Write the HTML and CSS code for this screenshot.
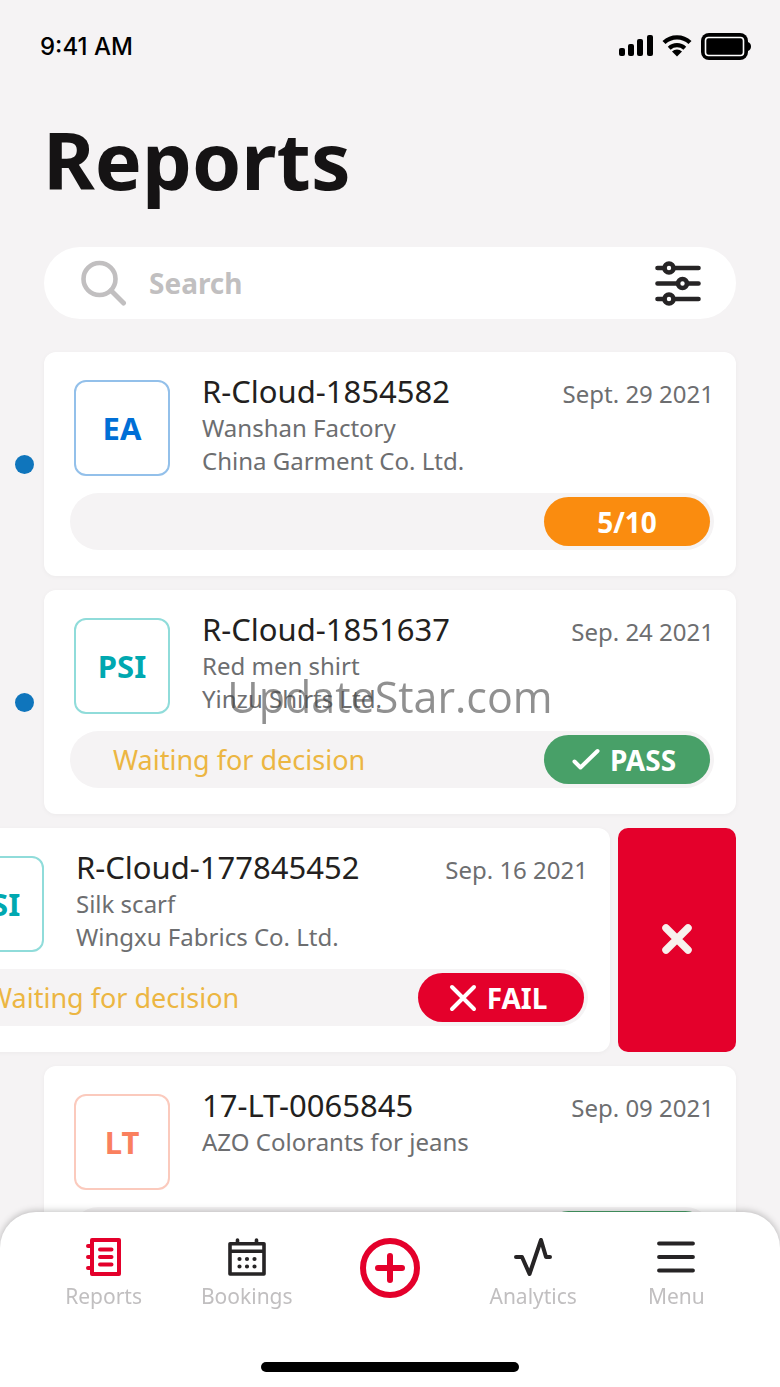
FILE: index.html
```html
<!DOCTYPE html>
<html lang="en">
<head>
    <meta charset="UTF-8">
    <meta name="viewport" content="width=device-width, initial-scale=1.0">
    <title>Reports</title>
    <link rel="stylesheet" href="styles.css">
</head>
<body>

<div class="app">
    <div class="status-bar">
        <span>9:41 AM</span>
        <div class="status-icons">
            <svg width="34" height="22" viewBox="0 0 34 22">
                <rect x="0" y="13" width="6" height="8" rx="2"/>
                <rect x="9" y="9" width="6" height="12" rx="2"/>
                <rect x="18" y="4" width="6" height="17" rx="2"/>
                <rect x="28" y="0" width="6" height="21" rx="2"/>
            </svg>
            <svg width="30" height="22" viewBox="0 0 30 22">
                <path d="M2 7.5a19 19 0 0 1 26 0" fill="none" stroke="#000" stroke-width="4.4"/>
                <path d="M7.2 13.2a11.6 11.6 0 0 1 15.6 0" fill="none" stroke="#000" stroke-width="4.2"/>
                <path d="M15 21.5l-5-5a7.5 7.5 0 0 1 10 0z"/>
            </svg>
            <svg width="50" height="27" viewBox="0 0 50 27">
                <rect x="0" y="0" width="47" height="27" rx="8"/>
                <path d="M47 9c4 1 4 8 0 9z"/>
                <rect x="4.5" y="4.5" width="38" height="18" rx="3" fill="none" stroke="#fff" stroke-width="1.6"/>
            </svg>
        </div>
    </div>

    <h1>Reports</h1>

    <form class="search">
        <label for="search" class="search-icon" aria-label="Search">
            <svg width="46" height="46" viewBox="0 0 46 46" fill="none" stroke="#c1bfc0" stroke-linecap="round">
                <circle cx="18.5" cy="19" r="16" stroke-width="4.6"/>
                <path d="M30 30.500l12.500 12.500" stroke-width="5"/>
            </svg>
        </label>
        <input type="text" id="search" name="search" placeholder="Search">
        <button type="button" class="filter" aria-label="Filter">
            <svg width="46" height="46" viewBox="0 0 46 46" fill="#fff" stroke="#262425" stroke-width="4.6" stroke-linecap="round">
                <path d="M2.5 8h41M2.5 23.5h41M2.5 39h41"/>
                <circle cx="14" cy="8" r="4.5"/>
                <circle cx="27.5" cy="23.5" r="4.5"/>
                <circle cx="14" cy="39" r="4.5"/>
            </svg>
        </button>
    </form>

    <main class="list">
        <div class="row">
            <span class="dot"></span>
            <article class="card">
                <div class="card-head">
                    <div class="tag ea">EA</div>
                    <div class="info">
                        <div class="info-top">
                            <h2>R-Cloud-1854582</h2>
                            <time datetime="2021-09-29">Sept. 29 2021</time>
                        </div>
                        <p>Wanshan Factory</p>
                        <p>China Garment Co. Ltd.</p>
                    </div>
                </div>
                <div class="progress">
                    <span class="badge orange">5/10</span>
                </div>
            </article>
        </div>

        <div class="row">
            <span class="dot"></span>
            <article class="card">
                <div class="card-head">
                    <div class="tag psi">PSI</div>
                    <div class="info">
                        <div class="info-top">
                            <h2>R-Cloud-1851637</h2>
                            <time datetime="2021-09-24">Sep. 24 2021</time>
                        </div>
                        <p>Red men shirt</p>
                        <p>Yinzu Shirts Ltd.</p>
                    </div>
                </div>
                <div class="progress">
                    <span class="waiting">Waiting for decision</span>
                    <span class="badge with-icon green">
                        <svg width="28" height="28" viewBox="0 0 28 28"><path d="M2.5 15.5l6 6L25.5 5"/></svg>
                        PASS
                    </span>
                </div>
            </article>
        </div>

        <!-- swiped open -->
        <div class="row">
            <article class="card">
                <div class="card-head">
                    <div class="tag psi">PSI</div>
                    <div class="info">
                        <div class="info-top">
                            <h2>R-Cloud-177845452</h2>
                            <time datetime="2021-09-16">Sep. 16 2021</time>
                        </div>
                        <p>Silk scarf</p>
                        <p>Wingxu Fabrics Co. Ltd.</p>
                    </div>
                </div>
                <div class="progress">
                    <span class="waiting">Waiting for decision</span>
                    <span class="badge with-icon red">
                        <svg width="28" height="28" viewBox="0 0 28 28"><path d="M3 3l22 22M25 3L3 25"/></svg>
                        FAIL
                    </span>
                </div>
            </article>
            <button type="button" class="delete" aria-label="Delete">
                <svg width="30" height="30" viewBox="0 0 30 30" fill="none" stroke="#f8f1ee" stroke-width="7.5" stroke-linecap="round">
                    <path d="M4 4l22 22M26 4L4 26"/>
                </svg>
            </button>
        </div>

        <div class="row">
            <article class="card">
                <div class="card-head">
                    <div class="tag lt">LT</div>
                    <div class="info">
                        <div class="info-top">
                            <h2>17-LT-0065845</h2>
                            <time datetime="2021-09-09">Sep. 09 2021</time>
                        </div>
                        <p>AZO Colorants for jeans</p>
                    </div>
                </div>
                <div class="progress">
                    <span class="badge green"></span>
                </div>
            </article>
        </div>
    </main>

    <div class="watermark">UpdateStar.com</div>

    <nav class="tabs">
        <div class="tab-items">
            <a href="#" class="tab">
                <svg width="38" height="38" viewBox="0 0 38 38" fill="none" stroke="#e4002b" stroke-width="4" stroke-linecap="round">
                    <path d="M7 2h27v34H7z" stroke-linejoin="round"/>
                    <path d="M15 11.5h11.5M15 19h11.5M15 26.5h11.5M3 8h4M3 19h4M3 30h4"/>
                </svg>
                Reports
            </a>
            <a href="#" class="tab">
                <svg width="38" height="38" viewBox="0 0 38 38" fill="none" stroke="#262425" stroke-width="3.6" stroke-linecap="round" stroke-linejoin="round">
                    <path d="M2 5.8h34V36H2zM2 13.2h34M9.5 2v3M28.5 2v3"/>
                    <path d="M11.5 21h0M19 21h0M26.5 21h0M11.5 28.5h0M19 28.5h0M26.5 28.5h0" stroke-width="4.2"/>
                </svg>
                Bookings
            </a>
            <a href="#" class="tab" aria-label="Add">
                <svg width="60" height="60" viewBox="0 0 60 60" fill="none" stroke="#e4002b" stroke-width="6" stroke-linecap="round">
                    <circle cx="30" cy="30" r="27"/>
                    <path d="M30 18v24M18 30h24"/>
                </svg>
            </a>
            <a href="#" class="tab">
                <svg width="38" height="38" viewBox="0 0 38 38" fill="none" stroke="#262425" stroke-width="4" stroke-linecap="round" stroke-linejoin="round">
                    <path d="M2 19h6l7.5 17L27 2l5 17h4"/>
                </svg>
                Analytics
            </a>
            <a href="#" class="tab">
                <svg width="38" height="38" viewBox="0 0 38 38" fill="none" stroke="#262425" stroke-width="3.8" stroke-linecap="round">
                    <path d="M2 5.5h34M2 19h34M2 32.5h34"/>
                </svg>
                Menu
            </a>
        </div>
        <div class="home-bar"></div>
    </nav>
</div>

</body>
</html>
```
FILE: styles.css
```css
:root {
    --bg: #f5f3f4;
    --dark: #231f20;
    --grey: #6d6e70;
    --light: #c1bfc0;
    --red: #e4002b;
    --green: #48a068;
    --orange: #fa8c0f;
}

* {
    box-sizing: border-box;
}

body {
    margin: 0;
    background: var(--bg);
    color: var(--dark);
    font-family: "Noto Sans", sans-serif;
}

.app {
    height: 100vh;
    overflow: hidden;
    padding: 0 44px;
}

/* Status bar */
.status-bar {
    display: flex;
    justify-content: space-between;
    align-items: center;
    height: 92px;
    margin: 0 -15px 0 -4px;
    color: #000;
    font-family: Inter, sans-serif;
    font-size: 24px;
    font-weight: 500;
}

.status-icons {
    display: flex;
    align-items: center;
    gap: 9px;
}

h1 {
    margin: 20px 0 39px -1px;
    color: #151314;
    font-size: 79px;
    line-height: 96px;
}

/* Search */
.search {
    display: flex;
    align-items: center;
    height: 72px;
    margin-bottom: 33px;
    padding: 0 35px 0 37px;
    border-radius: 36px;
    background: #fff;
}

.search svg {
    display: block;
}

.search input {
    flex: 1;
    min-width: 0;
    padding: 0 22px;
    border: none;
    outline: none;
    background: none;
    color: var(--dark);
    font-family: inherit;
    font-size: 28px;
    font-weight: bold;
}

.search input::placeholder {
    color: var(--light);
    opacity: 1;
}

.filter {
    padding: 0;
    border: none;
    background: none;
}

/* Report cards */
.list {
    display: flex;
    flex-direction: column;
    gap: 14px;
}

.row {
    display: flex;
    justify-content: flex-end;
    gap: 8px;
    position: relative;
}

.dot {
    position: absolute;
    top: 50%;
    left: -29px;
    width: 19px;
    height: 19px;
    margin-top: -9px;
    border-radius: 50%;
    background: #0f75bc;
}

.card {
    flex: 0 0 100%;
    padding: 19px 22px 26px 26px;
    border-radius: 12px;
    background: #fff;
    box-shadow: 0 1px 5px rgba(0, 0, 0, 0.04);
}

.card-head {
    display: flex;
    gap: 32px;
    min-height: 107px;
    margin-bottom: 15px;
}

.tag {
    display: flex;
    align-items: center;
    justify-content: center;
    width: 96px;
    height: 96px;
    margin: 9px 0 0 4px;
    border: 2px solid;
    border-radius: 12px;
    font-size: 31px;
    font-weight: bold;
}

.ea {
    border-color: #93c0ea;
    color: #006fd6;
}

.psi {
    border-color: #90dcda;
    color: #00a8b0;
}

.lt {
    border-color: #fbcabd;
    color: #fa805e;
}

.info {
    flex: 1;
}

.info-top {
    display: flex;
    justify-content: space-between;
    align-items: baseline;
}

h2 {
    margin: 0;
    font-size: 31px;
    font-weight: normal;
    line-height: 40px;
}

.info p,
.info time {
    margin: 0;
    color: var(--grey);
    font-size: 24px;
    line-height: 33px;
}

.progress {
    display: flex;
    align-items: center;
    height: 57px;
    padding: 4px 4px 4px 43px;
    border-radius: 29px;
    background: var(--bg);
}

.waiting {
    color: #ecb642;
    font-size: 27px;
}

.badge {
    display: flex;
    align-items: center;
    justify-content: center;
    gap: 10px;
    width: 166px;
    height: 49px;
    margin-left: auto;
    border-radius: 25px;
    color: #fff;
    font-size: 28px;
    font-weight: bold;
}

.with-icon {
    padding-right: 6px;
}

.badge svg {
    fill: none;
    stroke: #fff;
    stroke-width: 4;
    stroke-linecap: round;
    stroke-linejoin: round;
}

.orange {
    background: var(--orange);
}

.green {
    background: var(--green);
}

.red {
    background: var(--red);
}

.delete {
    flex: 0 0 118px;
    padding: 0;
    border: none;
    border-radius: 10px;
    background: var(--red);
}

.watermark {
    position: fixed;
    top: 50%;
    left: 0;
    right: 0;
    margin-top: -25px;
    color: rgba(70, 70, 70, 0.6);
    font-family: "Open Sans", sans-serif;
    font-size: 43px;
    line-height: 56px;
    text-align: center;
    pointer-events: none;
}

/* Bottom tabs */
.tabs {
    position: fixed;
    left: 0;
    right: 0;
    bottom: 0;
    padding: 26px 32px 15px;
    border-radius: 36px 36px 0 0;
    background: #fff;
    box-shadow: 0 -1px 7px rgba(0, 0, 0, 0.25);
}

.tab-items {
    display: grid;
    grid-template-columns: repeat(5, 1fr);
    height: 124px;
}

.tab {
    display: flex;
    flex-direction: column;
    align-items: center;
    gap: 6px;
    color: var(--light);
    font-size: 21px;
    line-height: 29px;
    text-decoration: none;
}

.home-bar {
    width: 258px;
    height: 10px;
    margin: 0 auto;
    border-radius: 5px;
    background: #000;
}
```
